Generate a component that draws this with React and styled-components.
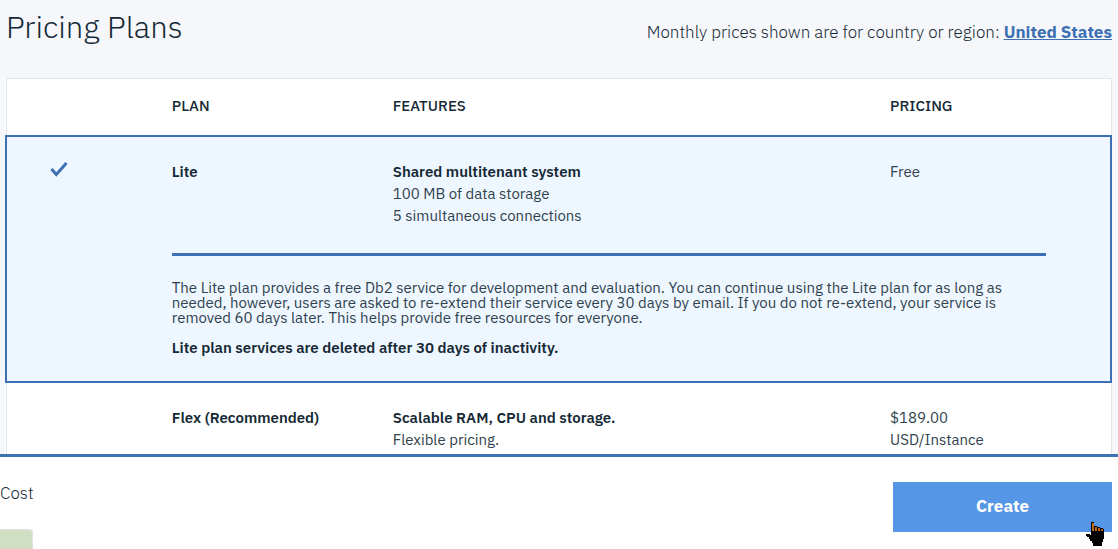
import React from "react";
import styled, { createGlobalStyle } from "styled-components";

const ink = "#152935";
const softInk = "#2f424d";
const accent = "#3d70b2";

const Global = createGlobalStyle`
  * { box-sizing: border-box; }
  body {
    margin: 0;
    background: #f5f7fb;
    color: ${softInk};
    font-family: "IBM Plex Sans", Roboto, "Liberation Sans", sans-serif;
    font-size: 15px;
    font-weight: 400;
  }
`;

const Page = styled.div`
  display: flex;
  flex-direction: column;
  height: 100vh;
  overflow: hidden;
`;

const Content = styled.main`
  flex: 1;
  min-height: 0;
  overflow: hidden;
  padding: 6px 6px 0 5px;
`;

const Heading = styled.header`
  display: flex;
  justify-content: space-between;
  align-items: center;
  height: 72px;
  padding-bottom: 20px;
`;

const Title = styled.h1`
  margin: 0;
  padding: 0 0 10px 1px;
  color: ${ink};
  font-size: 31px;
  font-weight: 300;
  line-height: 40px;
`;

const Region = styled.p`
  margin: 0;
  color: ${ink};
  font-size: 17px;
  font-weight: 300;
  line-height: 24px;
`;

const RegionLink = styled.a`
  color: ${accent};
  font-weight: 700;
`;

const PlanTable = styled.table`
  width: 100%;
  table-layout: fixed;
  border-collapse: collapse;
  border: 1px solid #dfe6eb;
  background: #fff;
  line-height: 22px;
`;

const Column = styled.col`
  width: ${(p) => p.$share}%;
`;

const HeaderCell = styled.th`
  height: 57px;
  padding: 0 0 2px;
  color: ${ink};
  text-align: left;
  font-size: 15px;
  font-weight: 500;
  text-transform: uppercase;
`;

const Plan = styled.tbody`
  ${(p) => p.$selected && `border: 2px solid ${accent}; background: #eef6ff;`}
`;

const Cell = styled.td`
  padding: 24px 0 26px;
  vertical-align: top;
`;

const NameCell = styled.th`
  padding: 24px 0 26px;
  color: ${ink};
  vertical-align: top;
  text-align: left;
  font-weight: 600;
`;

const Strong = styled.strong`
  color: ${ink};
  font-weight: 600;
`;

const Features = styled.ul`
  margin: 0;
  padding: 0;
  list-style: none;
`;

const Choice = styled.label`
  display: flex;
  position: relative;
  height: 20px;
  padding-left: 43px;
`;

const Radio = styled.input`
  position: absolute;
  width: 18px;
  height: 18px;
  margin: 0;
  opacity: 0;
`;

const DetailCell = styled.td`
  padding: 0 64px 26px 0;
  line-height: 15px;
`;

const Detail = styled.div`
  border-top: 3px solid ${accent};
  padding: 24px 24px 0 0;
`;

const Paragraph = styled.p`
  margin: 0 0 15px;
  &:last-child { margin-bottom: 0; }
`;

const Footer = styled.footer`
  display: flex;
  justify-content: space-between;
  height: 95px;
  border-top: 3px solid ${accent};
  background: #fff;
  overflow: hidden;
`;

const Cost = styled.div`
  padding-top: 24px;
  color: ${ink};
  font-size: 17px;
  font-weight: 300;
  line-height: 24px;
`;

const CostBadge = styled.div`
  width: 33px;
  height: 32px;
  margin-top: 24px;
  border: 1px solid #dfe3e6;
  border-left: 0;
  border-radius: 0 4px 4px 0;
  background: #d0dec2;
`;

const Action = styled.div`
  position: relative;
  padding: 25px 6px 0 0;
`;

const CreateButton = styled.button`
  width: 219px;
  height: 50px;
  padding: 0 0 2px;
  border: 0;
  background: #5596e6;
  color: #fff;
  font: inherit;
  font-size: 17px;
  font-weight: 700;
`;

const Pointer = styled.svg`
  position: absolute;
  right: 14px;
  bottom: 3px;
`;

function Check() {
  return (
    <svg width="18" height="18" viewBox="0 0 18 18" aria-hidden="true">
      <path d="M1.500 8 6.300 13.500 16.500 2" fill="none" stroke={accent} strokeWidth="3" />
    </svg>
  );
}

function PlanChoice({ name, selected }) {
  return (
    <Choice>
      <Radio type="radio" name="plan" aria-label={name} defaultChecked={selected} />
      {selected && <Check />}
    </Choice>
  );
}

export default function App() {
  return (
    <Page>
      <Global />
      <Content>
        <Heading>
          <Title>Pricing Plans</Title>
          <Region>
            Monthly prices shown are for country or region:{" "}
            <RegionLink href="#region">United States</RegionLink>
          </Region>
        </Heading>
        <PlanTable>
          <colgroup>
            <Column $share={15} />
            <Column $share={20} />
            <Column $share={45} />
            <Column $share={20} />
          </colgroup>
          <thead>
            <tr>
              <td />
              <HeaderCell scope="col">Plan</HeaderCell>
              <HeaderCell scope="col">Features</HeaderCell>
              <HeaderCell scope="col">Pricing</HeaderCell>
            </tr>
          </thead>
          <Plan $selected>
            <tr>
              <Cell><PlanChoice name="Lite" selected /></Cell>
              <NameCell scope="row">Lite</NameCell>
              <Cell>
                <Features>
                  <li><Strong>Shared multitenant system</Strong></li>
                  <li>100 MB of data storage</li>
                  <li>5 simultaneous connections</li>
                </Features>
              </Cell>
              <Cell>Free</Cell>
            </tr>
            <tr>
              <td />
              <DetailCell colSpan={3}>
                <Detail>
                  <Paragraph>
                    The Lite plan provides a free Db2 service for development and evaluation. You can continue using the Lite plan for as long as needed, however, users are asked to re-extend their service every 30 days by email. If you do not re-extend, your service is removed 60 days later. This helps provide free resources for everyone.
                  </Paragraph>
                  <Paragraph><Strong>Lite plan services are deleted after 30 days of inactivity.</Strong></Paragraph>
                </Detail>
              </DetailCell>
            </tr>
          </Plan>
          <Plan>
            <tr>
              <Cell><PlanChoice name="Flex" /></Cell>
              <NameCell scope="row">Flex (Recommended)</NameCell>
              <Cell>
                <Features>
                  <li><Strong>Scalable RAM, CPU and storage.</Strong></li>
                  <li>Flexible pricing.</li>
                </Features>
              </Cell>
              <Cell>$189.00<br />USD/Instance</Cell>
            </tr>
          </Plan>
        </PlanTable>
      </Content>
      <Footer>
        <Cost>
          Cost
          <CostBadge />
        </Cost>
        <Action>
          <CreateButton type="button">Create</CreateButton>
          <Pointer width="18" height="24" viewBox="0 0 18 24" shapeRendering="crispEdges" aria-hidden="true">
            <path d="M5 0h3v4h3v1h3v1h3v1h1v10h-1v3h-1v4H7v-3H6v-2H4v-2H3v-2H1v-1H0v-2h4v1h1z" fill="#000" />
            <path d="M6 1h1v8H6zM7 1h1v8H7zM9 5h2v4H9zM12 6h2v3h-2zM15 7h2v2h-2z" fill="#b8691a" />
          </Pointer>
        </Action>
      </Footer>
    </Page>
  );
}
